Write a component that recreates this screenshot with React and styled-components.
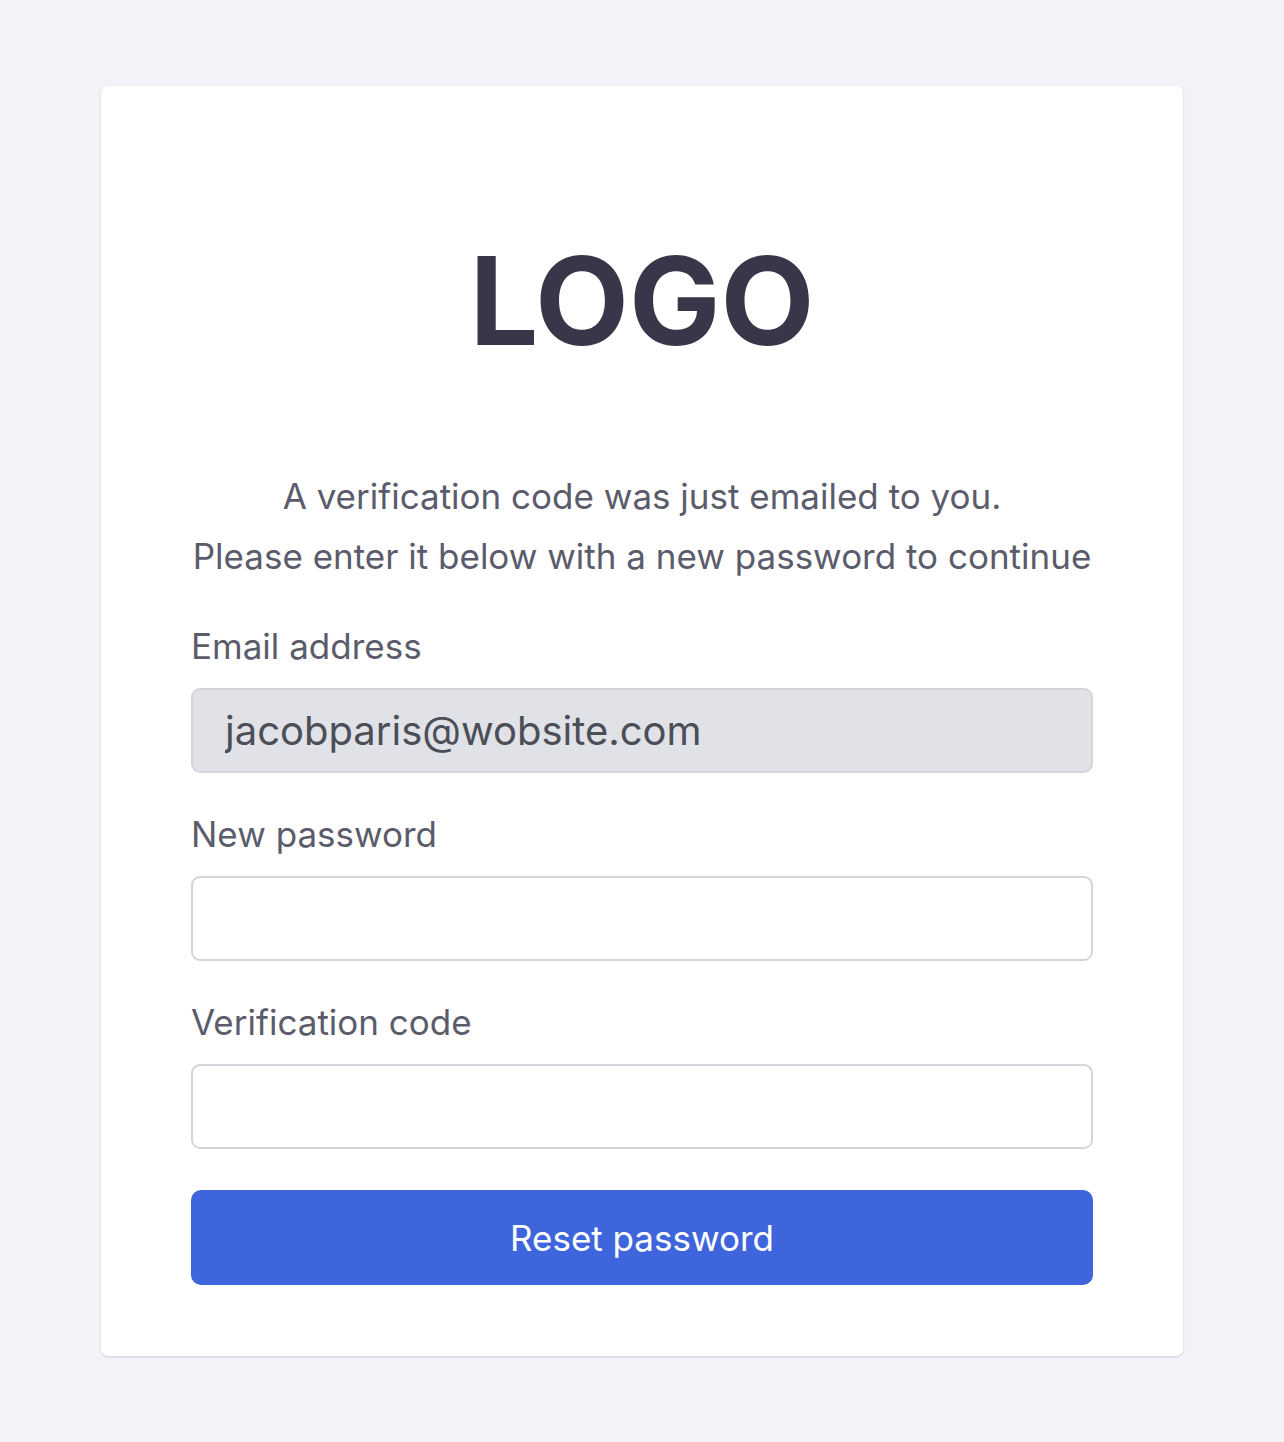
import React from "react";
import styled, { createGlobalStyle } from "styled-components";

const GlobalStyle = createGlobalStyle`
  html, body {
    margin: 0;
    padding: 0;
    background: #f2f2f7;
    font-family: Inter, "Noto Sans", sans-serif;
  }
  * { box-sizing: border-box; }
`;

const Page = styled.div`
  min-height: 1442px;
  padding: 86px 0;
  display: flex;
  justify-content: center;
  align-items: flex-start;
`;

const Card = styled.div`
  width: 1082px;
  background: #ffffff;
  border-radius: 7px;
  box-shadow: 0 1px 3px rgba(20, 20, 50, 0.1), 0 1px 2px rgba(20, 20, 50, 0.06);
  padding: 72px 90px 71px;
  display: flex;
  flex-direction: column;
`;

const Logo = styled.h1`
  margin: 0;
  padding: 82px 0 104px;
  text-align: center;
  font-size: 122px;
  line-height: 1;
  font-weight: 700;
  color: #383649;
`;

const Intro = styled.p`
  margin: 0;
  text-align: center;
  font-size: 35px;
  line-height: 60px;
  color: #5b5c6b;
`;

const Form = styled.form`
  display: flex;
  flex-direction: column;
`;

const Field = styled.div`
  display: flex;
  flex-direction: column;
  margin-top: ${(p) => (p.first ? "38px" : "39px")};
`;

const Label = styled.label`
  font-size: 35px;
  line-height: 44px;
  color: #5b5c6b;
  margin-bottom: 20px;
`;

const Input = styled.input`
  width: 100%;
  height: 85px;
  padding: 0 32px;
  border: 2px solid #d3d5da;
  border-radius: 9px;
  background: ${(p) => (p.readOnly ? "#e0e2e7" : "#ffffff")};
  font-family: Inter, "Noto Sans", sans-serif;
  font-size: 40px;
  color: #4b4e57;
  outline: none;
`;

const Submit = styled.button`
  margin-top: 41px;
  width: 100%;
  height: 95px;
  border: none;
  border-radius: 10px;
  background: #3e65db;
  color: #ffffff;
  font-family: Inter, "Noto Sans", sans-serif;
  font-size: 35px;
  cursor: pointer;
`;

export default function App() {
  return (
    <>
      <GlobalStyle />
      <Page>
        <Card>
          <Logo>LOGO</Logo>
          <Intro>
            A verification code was just emailed to you.
            <br />
            Please enter it below with a new password to continue
          </Intro>
          <Form onSubmit={(e) => e.preventDefault()}>
            <Field first>
              <Label htmlFor="email">Email address</Label>
              <Input id="email" readOnly value="jacobparis@wobsite.com" />
            </Field>
            <Field>
              <Label htmlFor="password">New password</Label>
              <Input id="password" type="password" />
            </Field>
            <Field>
              <Label htmlFor="code">Verification code</Label>
              <Input id="code" />
            </Field>
            <Submit type="submit">Reset password</Submit>
          </Form>
        </Card>
      </Page>
    </>
  );
}
